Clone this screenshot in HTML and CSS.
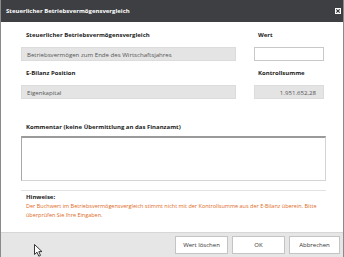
FILE: index.html
```html
<!DOCTYPE html>
<html lang="de">
<head>
<meta charset="utf-8">
<link rel="stylesheet" href="styles.css">
</head>
<body>
<div class="dialog">
  <div class="titlebar">
    <span class="title">Steuerlicher Betriebsvermögensvergleich</span>
    <span class="close"><svg width="6" height="6" viewBox="0 0 6 6"><rect width="6" height="6" fill="#fff"/><path d="M1.3 1.3L4.7 4.7M4.7 1.3L1.3 4.7" stroke="#333" stroke-width="1.2"/></svg></span>
  </div>
  <div class="content">
    <div class="grid">
      <div class="label bold">Steuerlicher Betriebsvermögensvergleich</div>
      <div class="label bold">Wert</div>
      <div class="field">Betriebsvermögen zum Ende des Wirtschaftsjahres</div>
      <div class="input"></div>
      <div class="label bold gap">E-Bilanz Position</div>
      <div class="label bold gap">Kontrollsumme</div>
      <div class="field">Eigenkapital</div>
      <div class="field num">1.951.652,28</div>
    </div>
    <div class="label bold comment-label">Kommentar (keine Übermittlung an das Finanzamt)</div>
    <div class="textarea"></div>
    <div class="notes">
      <div class="label bold">Hinweise:</div>
      <div class="warn">Der Buchwert im Betriebsvermögensvergleich stimmt nicht mit der Kontrollsumme aus der E-Bilanz überein. Bitte<br>überprüfen Sie Ihre Eingaben.</div>
    </div>
  </div>
  <div class="footer">
    <button class="btn">Wert löschen</button>
    <button class="btn">OK</button>
    <button class="btn">Abbrechen</button>
  </div>
  <svg class="cursor" width="9" height="13" viewBox="0 0 9 13"><path d="M0.5 0.5L0.5 10.5L3 8.2L4.8 12.2L6.5 11.4L4.8 7.6L8 7.6Z" fill="#fff" stroke="#222" stroke-width="0.9" stroke-linejoin="round"/></svg>
</div>
</body>
</html>
```
FILE: styles.css
```css
html, body {
  margin: 0;
  padding: 0;
  background: #fff;
}
body {
  font-family: "Open Sans", "Noto Sans", sans-serif;
  font-size: 6.1px;
  color: #333;
}
.dialog {
  position: relative;
  width: 344px;
  height: 257px;
  box-sizing: border-box;
  border-left: 1px solid #8a8a8a;
  border-right: 1px solid #8a8a8a;
  display: flex;
  flex-direction: column;
  background: #fff;
}
.titlebar {
  height: 22px;
  background: #3e3f43;
  display: flex;
  align-items: center;
  justify-content: space-between;
  padding: 0 2px 0 5px;
  flex-shrink: 0;
}
.title {
  color: #fff;
  font-weight: 700;
  font-size: 6px;
}
.close {
  display: flex;
  width: 6px;
  height: 6px;
}
.content {
  flex: 1;
  padding: 7px 17px 0 20px;
}
.grid {
  display: grid;
  grid-template-columns: 215px 70px;
  column-gap: 18px;
}
.label {
  padding-left: 5px;
  height: 12px;
  line-height: 12px;
}
.bold {
  font-weight: 700;
  font-size: 6px;
  color: #222;
}
.grid .label {
  margin-bottom: 6px;
}
.grid .label:nth-child(2),
.grid .label:nth-child(6) {
  padding-left: 4px;
}
.gap {
  margin-top: 6px;
}
.field {
  height: 14px;
  line-height: 13px;
  background: #e4e4e4;
  border: 1px solid #dcdcdc;
  box-sizing: border-box;
  padding: 0 5px;
  color: #555;
}
.num {
  text-align: right;
  padding-right: 7px;
}
.input {
  height: 14px;
  border: 1px solid #c8c8c8;
  box-sizing: border-box;
  background: #fff;
}
.comment-label {
  margin-top: 22px;
}
.textarea {
  margin-top: 3px;
  height: 45px;
  width: 305px;
  box-sizing: border-box;
  border: 1px solid #d4d4d4;
  border-top: 2px solid #9a9a9a;
  border-left: 1px solid #a8a8a8;
}
.notes {
  margin-top: 9px;
  border-top: 1px solid #e2e2e2;
  width: 305px;
  padding-top: 1px;
}
.notes .label {
  height: 10px;
  line-height: 10px;
}
.warn {
  color: #e06a1c;
  font-size: 5.5px;
  padding-left: 5px;
  line-height: 9px;
  white-space: nowrap;
}
.footer {
  height: 24px;
  flex-shrink: 0;
  background: #e6e6e6;
  border-top: 1px solid #d6d6d6;
  display: flex;
  justify-content: flex-end;
  align-items: center;
  gap: 4px;
  padding-right: 3px;
}
.btn {
  font-family: inherit;
  font-size: 6px;
  color: #333;
  background: #fff;
  border: 1px solid #c4c4c4;
  height: 18px;
  width: 53px;
  padding: 0;
}
.btn:last-child {
  width: 51px;
}
.cursor {
  position: absolute;
  left: 33px;
  top: 244px;
}
```
